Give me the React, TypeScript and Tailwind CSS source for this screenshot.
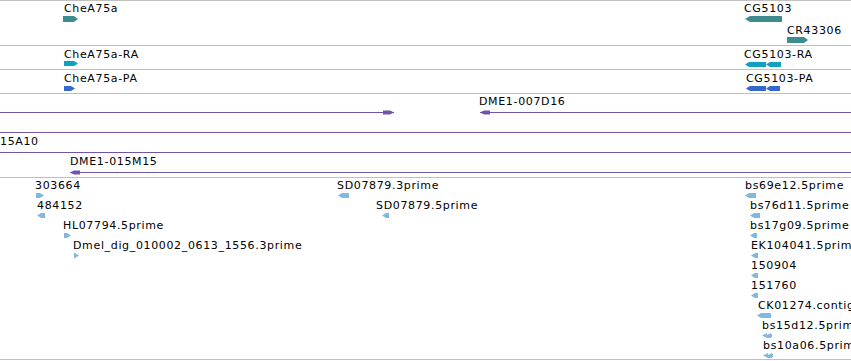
import React from "react";

type Dir = "left" | "right";

function Arrow({ w, h, dir, color, tip = 4 }: { w: number; h: number; dir: Dir; color: string; tip?: number }) {
  const m = h / 2;
  const pts =
    dir === "right"
      ? `0,0 ${w - tip},0 ${w},${m} ${w - tip},${h} 0,${h}`
      : `${tip},0 ${w},0 ${w},${h} ${tip},${h} 0,${m}`;
  return (
    <svg width={w} height={h} className="block">
      <polygon points={pts} fill={color} />
    </svg>
  );
}

function TwoExon({ w1, w2, h, color }: { w1: number; w2: number; h: number; color: string }) {
  const m = h / 2;
  const t = 4;
  const w = w1 + w2;
  const a = `${t},0 ${w1},0 ${w1},${h} ${t},${h} 0,${m}`;
  const b = `${w1 + t},0 ${w},0 ${w},${h} ${w1 + t},${h} ${w1},${m}`;
  return (
    <svg width={w} height={h} className="block">
      <polygon points={a} fill={color} />
      <polygon points={b} fill={color} />
    </svg>
  );
}

function DoubleArrow({ color }: { color: string }) {
  return (
    <svg width={10} height={5} className="block">
      <polygon points="0,2.5 5,0 5,5" fill={color} />
      <polygon points="4,2.5 9,0 9,5 5,5" fill={color} />
      <rect x={8} y={1} width={2} height={3} fill={color} />
    </svg>
  );
}

function BacLine({ w, dir, color, arrowAt }: { w: number; dir: Dir; color: string; arrowAt: number | null }) {
  return (
    <svg width={w} height={5} className="block">
      <rect x={0} y={2} width={w} height={1} fill={color} />
      {arrowAt !== null && dir === "right" && (
        <polygon
          points={`${arrowAt},0.5 ${arrowAt + 7},0.5 ${arrowAt + 11},2.5 ${arrowAt + 7},4.5 ${arrowAt},4.5`}
          fill={color}
        />
      )}
      {arrowAt !== null && dir === "left" && (
        <polygon
          points={`${arrowAt},2.5 ${arrowAt + 4},0.5 ${arrowAt + 10},0.5 ${arrowAt + 10},4.5 ${arrowAt + 4},4.5`}
          fill={color}
        />
      )}
    </svg>
  );
}

/* A feature on the genome canvas: label above glyph, placed at its genomic x. */
function Feature({
  x,
  label,
  glyphDx = 0,
  gapClass,
  children,
}: {
  x: number;
  label: string;
  glyphDx?: number;
  gapClass: string;
  children: React.ReactNode;
}) {
  return (
    <div className="absolute top-0 flex flex-col items-start" style={{ left: x }}>
      <div className="whitespace-nowrap leading-[11px] h-[11px]">{label}</div>
      <div className={gapClass} style={{ marginLeft: glyphDx }}>
        {children}
      </div>
    </div>
  );
}

function Lane({ h, children }: { h: string; children: React.ReactNode }) {
  return <div className={`relative w-full shrink-0 ${h}`}>{children}</div>;
}

const TEAL = "#3f8c8e";
const CYAN = "#10a0c0";
const BLUE = "#3468cc";
const PURPLE = "#7153aa";
const EST = "#80b8de";

type Est = { x: number; t: string; gx: number; gw: number; dir: Dir; dbl?: boolean };

const estRows: Est[][] = [
  [
    { x: 35, t: "303664", gx: 36, gw: 8, dir: "right" },
    { x: 337, t: "SD07879.3prime", gx: 338, gw: 11, dir: "left" },
    { x: 745, t: "bs69e12.5prime", gx: 745, gw: 11, dir: "left" },
  ],
  [
    { x: 37, t: "484152", gx: 37, gw: 8, dir: "left" },
    { x: 376, t: "SD07879.5prime", gx: 382, gw: 7, dir: "left" },
    { x: 750, t: "bs76d11.5prime", gx: 750, gw: 10, dir: "left" },
  ],
  [
    { x: 63, t: "HL07794.5prime", gx: 64, gw: 7, dir: "right" },
    { x: 750, t: "bs17g09.5prime", gx: 750, gw: 7, dir: "left" },
  ],
  [
    { x: 73, t: "Dmel_dig_010002_0613_1556.3prime", gx: 74, gw: 5, dir: "right" },
    { x: 751, t: "EK104041.5prime", gx: 751, gw: 7, dir: "left" },
  ],
  [{ x: 751, t: "150904", gx: 751, gw: 7, dir: "left" }],
  [{ x: 751, t: "151760", gx: 751, gw: 7, dir: "left" }],
  [{ x: 758, t: "CK01274.contig", gx: 757, gw: 14, dir: "left" }],
  [{ x: 762, t: "bs15d12.5prime", gx: 762, gw: 10, dir: "left", dbl: true }],
  [{ x: 763, t: "bs10a06.5prime", gx: 763, gw: 10, dir: "left", dbl: true }],
];

export default function App() {
  return (
    <div className="w-[851px] h-[361px] overflow-hidden bg-white text-black text-[11px] tracking-[0.65px] font-['DejaVu_Sans',sans-serif] flex flex-col">
      {/* Gene track */}
      <div className="h-[45px] shrink-0 border-t border-[#c0c0c0] pt-[2px] flex flex-col">
        <Lane h="h-[22px]">
          <Feature x={64} label="CheA75a" glyphDx={-1} gapClass="mt-[2px]">
            <Arrow w={15} h={6} dir="right" color={TEAL} />
          </Feature>
          <Feature x={744} label="CG5103" glyphDx={1} gapClass="mt-[2px]">
            <Arrow w={37} h={6} dir="left" color={TEAL} tip={5} />
          </Feature>
        </Lane>
        <Lane h="h-[20px]">
          <Feature x={787} label="CR43306" gapClass="mt-[1px]">
            <Arrow w={21} h={6} dir="right" color={TEAL} />
          </Feature>
        </Lane>
      </div>

      {/* Transcript track */}
      <div className="h-[24px] shrink-0 border-t border-[#c0c0c0] pt-[3px]">
        <Lane h="h-[20px]">
          <Feature x={64} label="CheA75a-RA" gapClass="mt-[1px]">
            <Arrow w={14} h={5} dir="right" color={CYAN} />
          </Feature>
          <Feature x={744} label="CG5103-RA" glyphDx={1} gapClass="mt-[2px]">
            <TwoExon w1={21} w2={15} h={5} color={CYAN} />
          </Feature>
        </Lane>
      </div>

      {/* Protein track */}
      <div className="h-[24px] shrink-0 border-t border-[#c0c0c0] pt-[3px]">
        <Lane h="h-[20px]">
          <Feature x={64} label="CheA75a-PA" gapClass="mt-[2px]">
            <Arrow w={11} h={5} dir="right" color={BLUE} />
          </Feature>
          <Feature x={746} label="CG5103-PA" gapClass="mt-[2px]">
            <TwoExon w1={20} w2={14} h={5} color={BLUE} />
          </Feature>
        </Lane>
      </div>

      {/* BAC track */}
      <div className="h-[84px] shrink-0 border-t border-[#c0c0c0] pt-[2px] flex flex-col">
        <Lane h="h-[20px]">
          <Feature x={0} label=" " gapClass="mt-[3px]">
            <BacLine w={394} dir="right" color={PURPLE} arrowAt={383} />
          </Feature>
          <Feature x={479} label="DME1-007D16" glyphDx={1} gapClass="mt-[3px]">
            <BacLine w={371} dir="left" color={PURPLE} arrowAt={0} />
          </Feature>
        </Lane>
        <Lane h="h-[20px]">
          <Feature x={0} label=" " gapClass="mt-[3px]">
            <BacLine w={851} dir="right" color={PURPLE} arrowAt={null} />
          </Feature>
        </Lane>
        <Lane h="h-[20px]">
          <Feature x={0} label="15A10" gapClass="mt-[3px]">
            <BacLine w={851} dir="right" color={PURPLE} arrowAt={null} />
          </Feature>
        </Lane>
        <Lane h="h-[20px]">
          <Feature x={70} label="DME1-015M15" gapClass="mt-[3px]">
            <BacLine w={781} dir="left" color={PURPLE} arrowAt={0} />
          </Feature>
        </Lane>
      </div>

      {/* EST track */}
      <div className="h-[183px] shrink-0 border-t border-b border-[#c0c0c0] pt-[2px] flex flex-col">
        {estRows.map((row, i) => (
          <Lane key={i} h="h-[20px]">
            {row.map((f, j) => (
              <Feature key={j} x={f.x} label={f.t} glyphDx={f.gx - f.x} gapClass="mt-[2px]">
                {f.dbl ? <DoubleArrow color={EST} /> : <Arrow w={f.gw} h={5} dir={f.dir} color={EST} tip={4} />}
              </Feature>
            ))}
          </Lane>
        ))}
      </div>
    </div>
  );
}
